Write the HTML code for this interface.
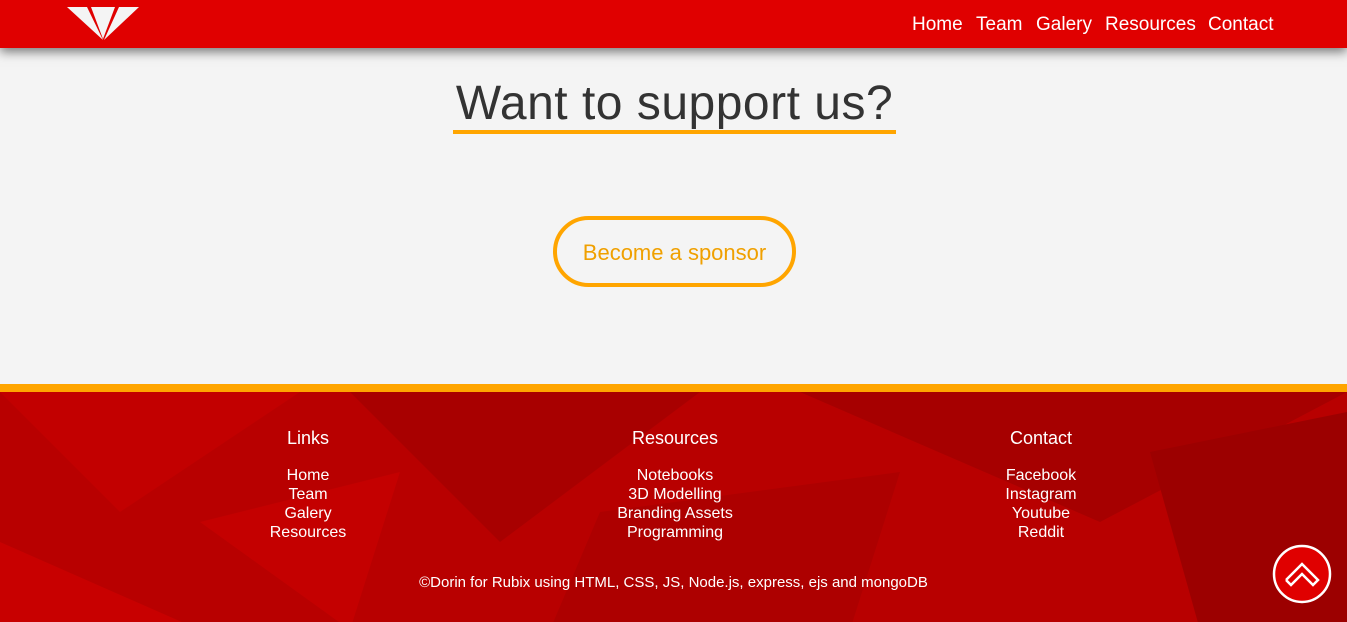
<!DOCTYPE html>
<html><head><style>
*{margin:0;padding:0;box-sizing:border-box}
body{width:1347px;height:622px;overflow:hidden;background:#f4f4f4;font-family:"Liberation Sans",sans-serif;position:relative}
.nav{position:absolute;top:0;left:0;width:1347px;height:48px;background:#e00000;box-shadow:0 4px 10px rgba(0,0,0,.5);z-index:2}
.nav a{position:absolute;top:14px;color:#fff;font-size:19px;text-decoration:none}
h1{position:absolute;top:77px;left:453px;width:443px;text-align:center;font-weight:normal;font-size:48px;color:#333;letter-spacing:.5px;border-bottom:4px solid #ffa500;height:57px;line-height:54px}
.btn{position:absolute;left:553px;top:216px;width:243px;height:71px;border:4px solid #ffa500;border-radius:36px;color:#f0a000;font-size:22px;text-align:center;line-height:66px}
.foot{position:absolute;top:384px;left:0;width:1347px;height:238px;background:#b80000;border-top:8px solid #ffa500;overflow:hidden}
.col{position:absolute;top:36px;text-align:center;color:#fff;width:200px}
.col h3{font-weight:normal;font-size:18px;margin-bottom:17px}
.col div{font-size:16px;line-height:19px}
.copy{position:absolute;top:182px;left:0;width:1347px;text-align:center;color:#fff;font-size:15px}
</style></head><body>
<div class="nav">
<svg style="position:absolute;left:67px;top:7px" width="72" height="33" viewBox="0 0 72 33">
<polygon points="0,0 20,0 36,33" fill="#f4f4f4"/><polygon points="24,0 48,0 36,32" fill="#f4f4f4"/><polygon points="52,0 72,0 37,33" fill="#f4f4f4"/></svg>
<a style="left:912px">Home</a><a style="left:976px">Team</a><a style="left:1036px">Galery</a><a style="left:1105px">Resources</a><a style="left:1208px">Contact</a>
</div>
<h1>Want to support us?</h1>
<div class="btn">Become a sponsor</div>
<div class="foot">
<svg width="1347" height="238" style="position:absolute;left:0;top:0">
<polygon points="0,0 300,0 120,120" fill="#c20000"/><polygon points="350,0 700,0 500,150" fill="#a80000"/>
<polygon points="800,0 1347,0 1100,130" fill="#a60000"/><polygon points="0,150 200,238 0,238" fill="#c80000"/>
<polygon points="1150,60 1347,20 1347,238 1200,238" fill="#9c0000"/><polygon points="600,120 900,80 850,238 550,238" fill="#ad0000"/>
<polygon points="200,130 400,80 350,238" fill="#c40000"/></svg>
<div class="col" style="left:208px"><h3>Links</h3><div>Home<br>Team<br>Galery<br>Resources</div></div>
<div class="col" style="left:575px"><h3>Resources</h3><div>Notebooks<br>3D Modelling<br>Branding Assets<br>Programming</div></div>
<div class="col" style="left:941px"><h3>Contact</h3><div>Facebook<br>Instagram<br>Youtube<br>Reddit</div></div>
<div class="copy">©Dorin for Rubix using HTML, CSS, JS, Node.js, express, ejs and mongoDB</div>
</div>
<svg style="position:absolute;left:1272px;top:544px" width="60" height="60" viewBox="0 0 60 60">
<circle cx="30" cy="30" r="28" fill="#e00000" stroke="#fff" stroke-width="2.5"/>
<polyline points="14,36 30,20 46,36 41,41 30,30 19,41 14,36" fill="none" stroke="#fff" stroke-width="2.5"/></svg>
</body></html>
